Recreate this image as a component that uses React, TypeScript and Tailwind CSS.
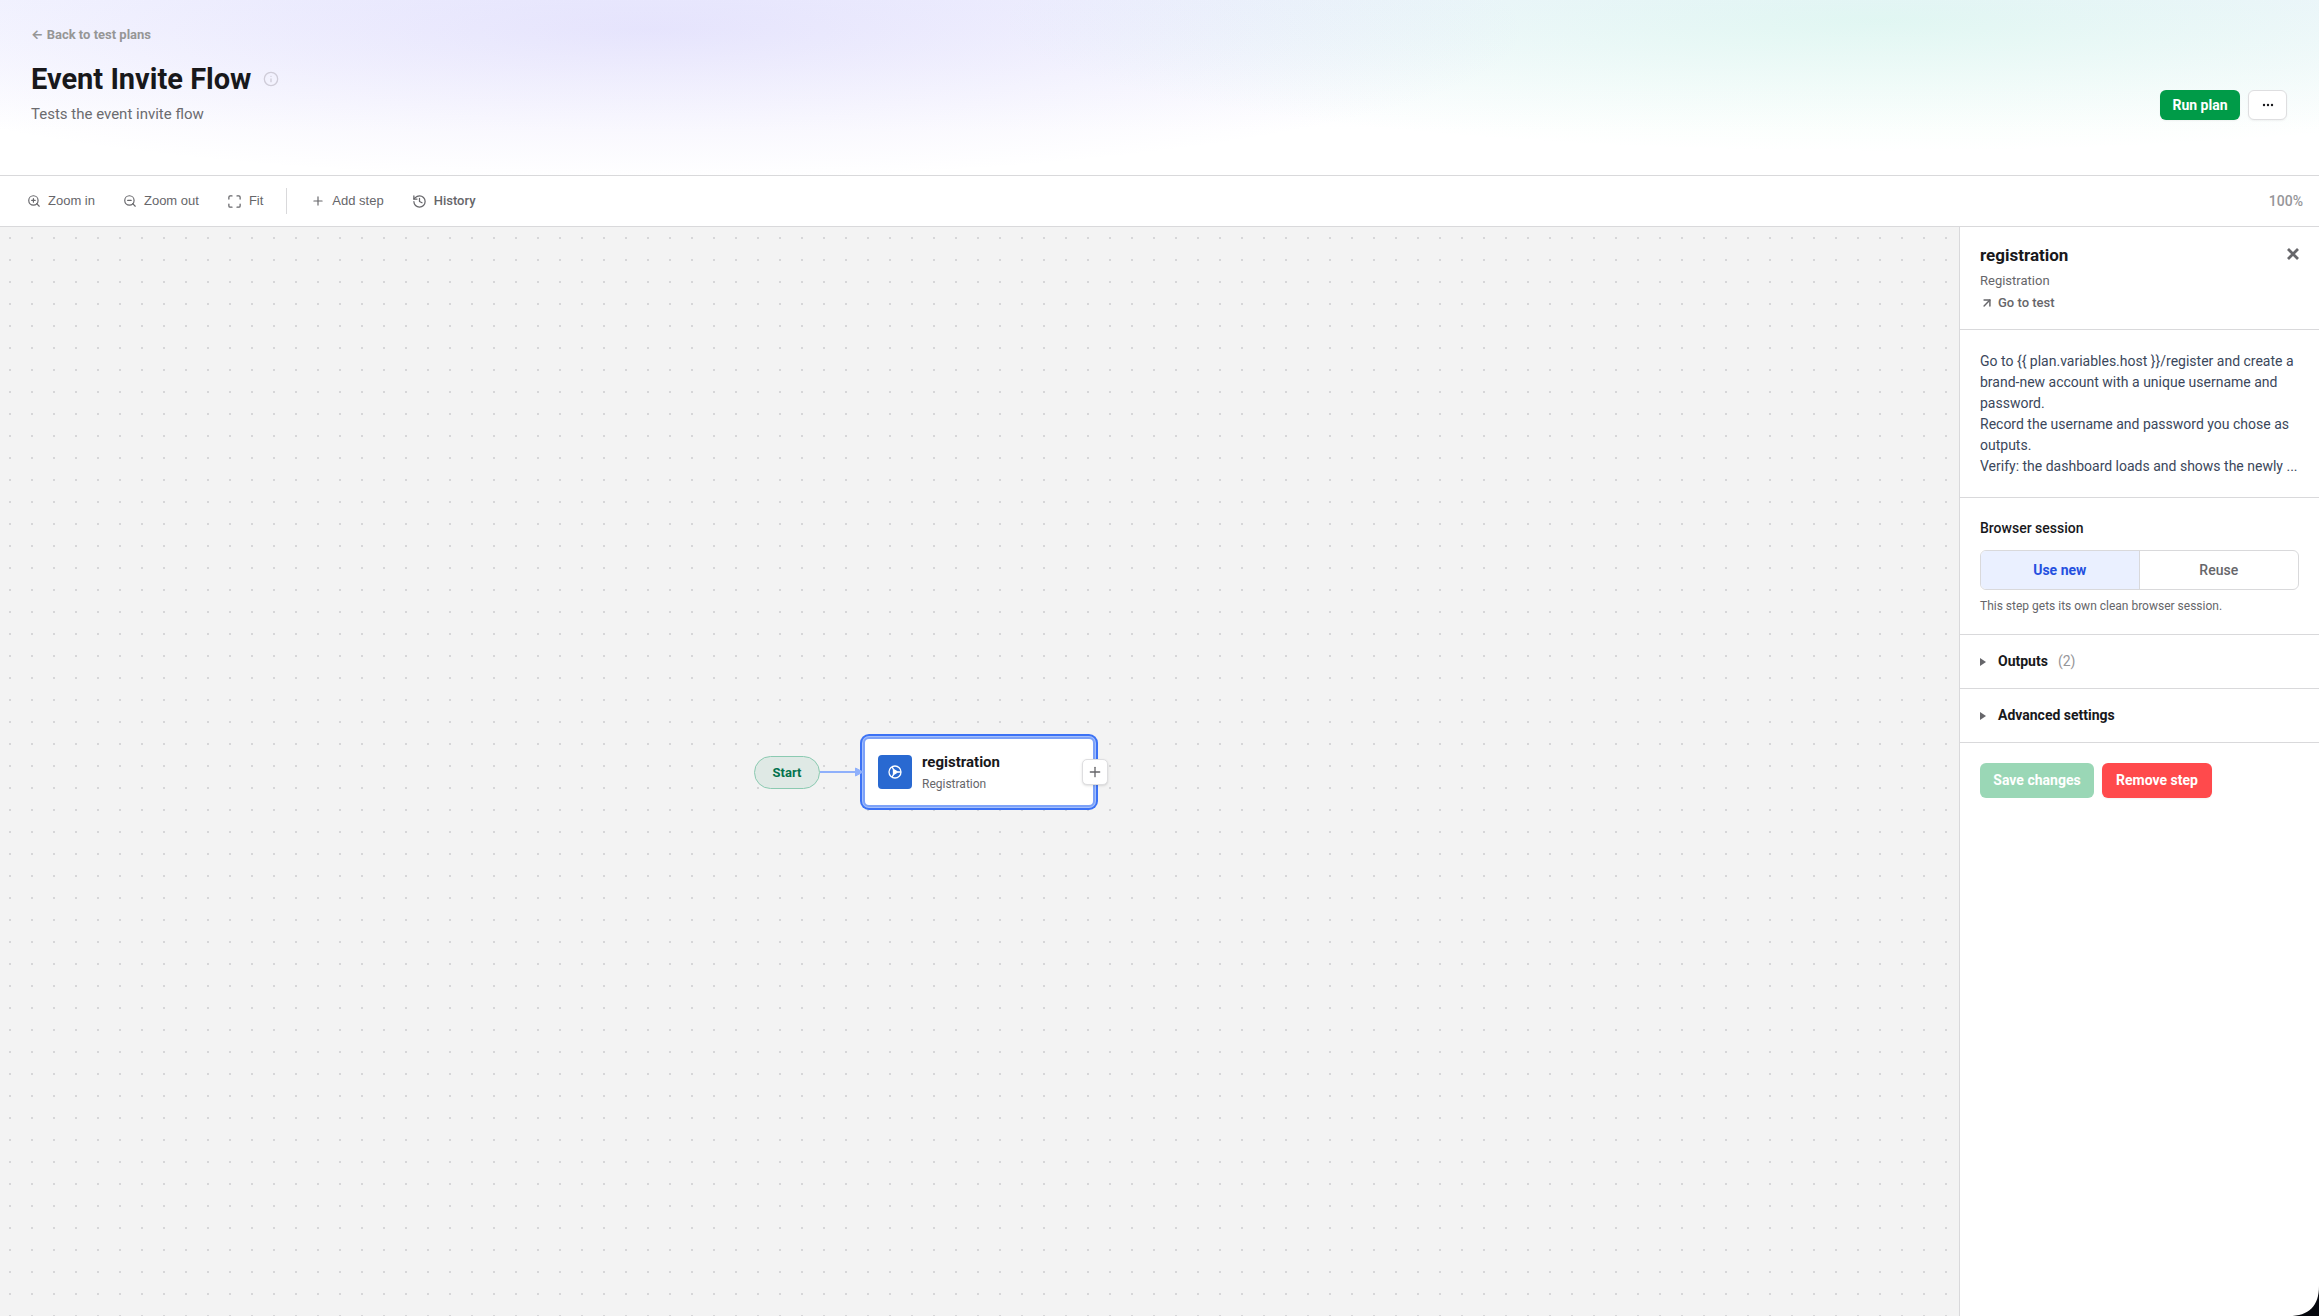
import { useState } from 'react';
import type { ReactNode } from 'react';
import { ArrowUpRight, History, Info, Maximize, Plus, ZoomIn, ZoomOut } from 'lucide-react';

type ToolButtonProps = {
  icon: ReactNode;
  label: string;
  className?: string;
};

const ToolButton = ({ icon, label, className = '' }: ToolButtonProps) => (
  <button type="button" className={`flex h-7 items-center gap-[7px] px-3.5 text-[13px] ${className}`}>
    {icon}
    {label}
  </button>
);

const Header = () => (
  <header className="flex items-start justify-between border-b border-[#d9d9db] bg-[radial-gradient(ellipse_38%_86%_at_28%_17%,rgba(139,124,240,0.16),rgba(139,124,240,0)),radial-gradient(ellipse_38%_75%_at_81%_12%,rgba(100,240,170,0.15),rgba(100,240,170,0)),linear-gradient(to_bottom,#f5f6ff,#ffffff_75%)] pb-[51px] pl-[31px] pr-8 pt-[25px]">
    <div>
      <a href="#plans" className="block text-[13px] leading-5 font-bold text-[#969696]">
        <span className="font-['Inter',sans-serif] leading-none">←</span> Back to test plans
      </a>
      <div className="mt-4 flex items-center gap-3">
        <h1 className="text-[29px] leading-9 font-bold text-[#18181b]">Event Invite Flow</h1>
        <Info className="size-4 text-[#cfccd8]" strokeWidth={2} />
      </div>
      <p className="mt-[7px] text-[15px] leading-5 text-[#6b6b6f]">Tests the event invite flow</p>
    </div>
    <div className="mt-[65px] flex gap-2">
      <button type="button" className="h-[30px] w-20 rounded-md bg-[#009b48] text-[14px] font-bold text-white shadow-xs">
        Run plan
      </button>
      <button type="button" aria-label="More actions" className="flex h-[30px] w-[39px] items-center justify-center rounded-md border border-[#dedee0] bg-white shadow-xs">
        <svg className="h-1 w-3" viewBox="0 0 12 4" fill="#18181b">
          <circle cx="2" cy="2" r="1.2" />
          <circle cx="6" cy="2" r="1.2" />
          <circle cx="10" cy="2" r="1.2" />
        </svg>
      </button>
    </div>
  </header>
);

const Toolbar = () => (
  <div className="flex h-[51px] items-center justify-between border-b border-[#d9d9db] bg-white pl-[13px] pr-4">
    <div className="flex items-center font-['Liberation_Sans',sans-serif] text-[#66666a]">
      <ToolButton icon={<ZoomIn className="size-3.5" />} label="Zoom in" />
      <ToolButton icon={<ZoomOut className="size-3.5" />} label="Zoom out" />
      <ToolButton icon={<Maximize className="size-[15px]" />} label="Fit" />
      <div className="ml-[9px] mr-2.5 h-[26px] w-px bg-[#d9d9db]" />
      <ToolButton icon={<Plus className="size-3.5" />} label="Add step" />
      <ToolButton icon={<History className="size-[15px]" />} label="History" className="font-['Roboto',sans-serif] font-medium" />
    </div>
    <span className="text-[14px] font-medium text-[#969699]">100%</span>
  </div>
);

const Canvas = () => (
  <main className="relative flex-1 overflow-hidden bg-[#f3f3f3]">
    <svg className="absolute inset-0 size-full">
      <defs>
        <pattern id="dots" x="-1" y="0" width="22" height="22" patternUnits="userSpaceOnUse">
          <rect x="10" y="10" width="2" height="2" fill="#d6d6d8" />
        </pattern>
      </defs>
      <rect width="100%" height="100%" fill="url(#dots)" />
    </svg>

    <div className="absolute left-[754px] top-[529px] flex h-[33px] w-[66px] items-center justify-center rounded-full border border-[#8bcab1] bg-[#dfe9e5] text-[13px] font-bold text-[#04724d]">
      Start
    </div>

    <div className="absolute left-[863px] top-[510px] flex h-[70px] w-[232px] items-center gap-2.5 rounded-md border-2 border-[#7da2f8] bg-white pl-[13px] shadow-[0_0_0_1px_#a5c0fb,0_0_0_3px_#3c72f5]">
      <div className="flex size-[34px] items-center justify-center rounded-sm bg-[#2969d1]">
        <svg className="size-3.5" viewBox="0 0 14 14" fill="none" stroke="#fff" strokeWidth="1.3">
          <circle cx="7" cy="7" r="6" />
          <path d="M5.5 4.5v5l4-2.5z" fill="#fff" />
          <path d="M9.5 7H13M5.5 4.5 4 1.9M5.5 9.5 4 12.1" />
        </svg>
      </div>
      <div>
        <div className="text-[15px] leading-5 font-bold text-[#18181b]">registration</div>
        <div className="mt-1 text-[12px] leading-4 text-[#66666a]">Registration</div>
      </div>
    </div>

    <svg className="absolute left-[820px] top-[540px] h-[10px] w-11" viewBox="0 0 44 10">
      <path d="M0 5h36" stroke="#8fb0fb" strokeWidth="2" />
      <path d="M35.5 1v8l7.5-4z" fill="#8fb0fb" stroke="#8fb0fb" strokeLinejoin="round" />
    </svg>

    <button type="button" aria-label="Add next step" className="absolute left-[1082px] top-[532px] flex size-[26px] items-center justify-center rounded-[5px] border border-[#dedee0] bg-white text-[#66666a] shadow-sm">
      <Plus className="size-4" strokeWidth={2} />
    </button>
  </main>
);

type DisclosureProps = {
  title: string;
  count?: number;
};

const Disclosure = ({ title, count }: DisclosureProps) => (
  <button type="button" className="flex h-[54px] w-full items-center border-b border-[#d9d9db] px-5 text-[14px] font-bold text-[#18181b]">
    <svg className="mr-3 h-2 w-1.5" viewBox="0 0 6 8" fill="#66666a">
      <path d="M0 0v8l6-4z" />
    </svg>
    {title}
    {count !== undefined && <span className="ml-2.5 text-[14px] font-normal text-[#969699]">({count})</span>}
  </button>
);

const StepPanel = () => {
  const [session, setSession] = useState('new');

  return (
    <aside className="w-[360px] shrink-0 border-l border-[#d9d9db] bg-white">
      <div className="flex items-start justify-between border-b border-[#d9d9db] px-5 py-4">
        <div>
          <h2 className="text-[17px] leading-6 font-bold text-[#18181b]">registration</h2>
          <p className="mt-1 text-[13px] leading-5 text-[#66666a]">Registration</p>
          <a href="#test" className="mt-0.5 flex items-center gap-1 text-[13px] leading-5 font-medium text-[#66666a]">
            <ArrowUpRight className="size-3.5" strokeWidth={2.5} />
            Go to test
          </a>
        </div>
        <button type="button" aria-label="Close" className="mt-[3px] flex h-4 items-center">
          <svg className="size-3" viewBox="0 0 12 12" stroke="#66666a" strokeWidth="2.8">
            <path d="m1 1 10 10M11 1 1 11" />
          </svg>
        </button>
      </div>

      <div className="border-b border-[#d9d9db] px-5 pb-5 pt-[21px] text-[14px] leading-[21px] text-[#3b475b]">
        <p>
          {'Go to {{ plan.variables.host }}/register and create a'}
          <br />
          brand-new account with a unique username and
          <br />
          password.
        </p>
        <p>
          Record the username and password you chose as
          <br />
          outputs.
        </p>
        <p className="whitespace-nowrap">Verify: the dashboard loads and shows the newly ...</p>
      </div>

      <div className="border-b border-[#d9d9db] px-5 pb-[18px] pt-5">
        <h3 className="text-[14px] leading-5 font-medium text-[#18181b]">Browser session</h3>
        <div className="mt-3 grid h-10 grid-cols-2 overflow-hidden rounded-md border border-[#d9d9db] text-[14px]">
          <button
            type="button"
            onClick={() => setSession('new')}
            className={session === 'new' ? 'border-r border-[#d9d9db] bg-[#eaf0ff] font-bold text-[#2450e0]' : 'border-r border-[#d9d9db] font-medium text-[#66666a]'}
          >
            Use new
          </button>
          <button
            type="button"
            onClick={() => setSession('reuse')}
            className={session === 'reuse' ? 'bg-[#eaf0ff] font-bold text-[#2450e0]' : 'font-medium text-[#66666a]'}
          >
            Reuse
          </button>
        </div>
        <p className="mt-1.5 text-[12px] leading-5 text-[#66666a]">This step gets its own clean browser session.</p>
      </div>

      <Disclosure title="Outputs" count={2} />
      <Disclosure title="Advanced settings" />

      <div className="flex gap-2 p-5 text-[14px] font-bold text-white">
        <button type="button" className="h-[35px] w-[114px] rounded-md bg-[#9ad7b6]">
          Save changes
        </button>
        <button type="button" className="h-[35px] w-[110px] rounded-md bg-[#ff4a4c] shadow-xs">
          Remove step
        </button>
      </div>
    </aside>
  );
};

export default function App() {
  return (
    <div className="relative flex min-h-screen flex-col overflow-hidden bg-white font-['Roboto',sans-serif]">
      <Header />
      <Toolbar />
      <div className="flex flex-1">
        <Canvas />
        <StepPanel />
      </div>
      <svg className="absolute bottom-0 right-0 h-[30px] w-[30px]" viewBox="0 0 30 30" fill="#05070d">
        <path d="M30 0v30H0C20 30 30 20 30 0z" />
      </svg>
    </div>
  );
}
